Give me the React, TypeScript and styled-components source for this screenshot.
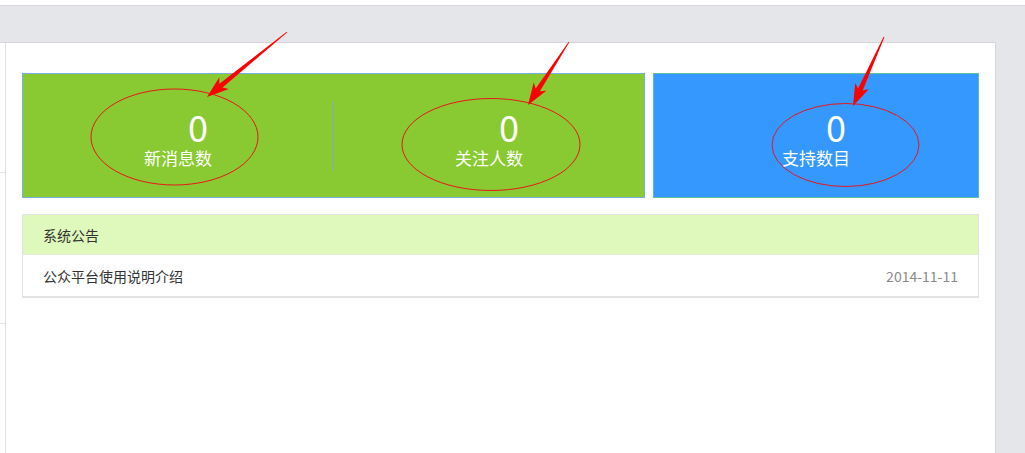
import React from "react";
import styled, { createGlobalStyle } from "styled-components";

const GlobalStyle = createGlobalStyle`
  html, body { margin: 0; padding: 0; background: #ffffff; }
  body { font-family: "Microsoft YaHei", "Noto Sans CJK SC", "Noto Sans", sans-serif; }
  * { box-sizing: border-box; }
`;

const Page = styled.div`
  position: relative;
  width: 1025px;
  height: 453px;
  overflow: hidden;
  background: #ffffff;
  display: flex;
  flex-direction: column;
`;

const TopStrip = styled.div`
  height: 6px;
  flex: none;
  background: #ffffff;
  border-bottom: 1px solid #d9d9dc;
`;

const Shell = styled.div`
  flex: 1;
  display: flex;
  background: #e5e6ea;
  padding: 36px 29px 0 0;
  min-height: 0;
`;

const Body = styled.div`
  flex: 1;
  display: flex;
  background: #ffffff;
  border-top: 1px solid #d6d6da;
  border-right: 1px solid #d6d6da;
`;

const SideStub = styled.div`
  width: 6px;
  flex: none;
  display: flex;
  flex-direction: column;
  border-right: 1px solid #e2e2e4;
  background: #ffffff;
`;

const SideItem = styled.div<{ $h: number }>`
  height: ${(p) => p.$h}px;
  flex: none;
  border-bottom: 1px solid #e2e2e4;
`;

const Content = styled.div`
  flex: 1;
  padding: 30px 16px 0 16px;
  display: flex;
  flex-direction: column;
`;

const StatsRow = styled.div`
  display: flex;
  gap: 8px;
  height: 125px;
`;

const StatCard = styled.div<{ $bg: string; $border: string; $w: number }>`
  width: ${(p) => p.$w}px;
  flex: none;
  display: flex;
  align-items: stretch;
  background: ${(p) => p.$bg};
  border: 1px solid ${(p) => p.$border};
`;

const Stat = styled.div`
  flex: 1;
  display: flex;
  flex-direction: column;
  align-items: center;
  padding-top: 32px;
  color: #ffffff;
`;

const StatNumber = styled.div`
  font-family: "Noto Sans CJK SC", "Noto Sans", sans-serif;
  font-size: 36px;
  line-height: 40px;
  margin-left: 40px;
`;

const StatLabel = styled.div`
  font-family: "Noto Sans CJK SC", sans-serif;
  font-size: 17px;
  line-height: 24px;
`;

const StatDivider = styled.div`
  width: 1px;
  height: 70px;
  align-self: center;
  background: #7faacb;
`;

const Notice = styled.div`
  margin-top: 16px;
  border: 1px solid #e3e3e6;
  border-bottom-width: 2px;
`;

const NoticeHeader = styled.div`
  height: 40px;
  display: flex;
  align-items: center;
  padding: 0 20px;
  background: #dff8bb;
  border-bottom: 1px solid #e4ecd8;
  font-family: "Noto Sans CJK SC", sans-serif;
  font-size: 14px;
  color: #333333;
`;

const NoticeRow = styled.div`
  height: 41px;
  display: flex;
  align-items: center;
  justify-content: space-between;
  padding: 0 20px;
  background: #ffffff;
  font-family: "Noto Sans CJK SC", sans-serif;
  font-size: 14px;
  color: #333333;
`;

const NoticeDate = styled.span`
  color: #8a8a8a;
  font-family: "Noto Sans CJK SC", sans-serif;
  font-size: 14px;
`;

const Overlay = styled.svg`
  position: absolute;
  left: 0;
  top: 0;
  width: 1025px;
  height: 453px;
  pointer-events: none;
`;

type Pt = [number, number];

function arrowPoints(tail: Pt, tip: Pt): string {
  const dx = tip[0] - tail[0];
  const dy = tip[1] - tail[1];
  const len = Math.hypot(dx, dy);
  const ux = dx / len;
  const uy = dy / len;
  const nx = -uy;
  const ny = ux;
  const headLen = 22;
  const headW = 15;
  const shaftW = 5;
  const bx = tip[0] - ux * headLen;
  const by = tip[1] - uy * headLen;
  const notch = 4;
  const cx = bx + ux * notch;
  const cy = by + uy * notch;
  const pts: Pt[] = [
    [tail[0] + nx * 0.4, tail[1] + ny * 0.4],
    [cx + nx * (shaftW / 2), cy + ny * (shaftW / 2)],
    [bx + nx * (headW / 2), by + ny * (headW / 2)],
    tip,
    [bx - nx * (headW / 2), by - ny * (headW / 2)],
    [cx - nx * (shaftW / 2), cy - ny * (shaftW / 2)],
    [tail[0] - nx * 0.4, tail[1] - ny * 0.4],
  ];
  return pts.map((p) => `${p[0].toFixed(1)},${p[1].toFixed(1)}`).join(" ");
}

const ellipses = [
  { cx: 174.5, cy: 137, rx: 83.5, ry: 48 },
  { cx: 491, cy: 144.5, rx: 89, ry: 46 },
  { cx: 845.5, cy: 145, rx: 73.5, ry: 41.5 },
];

const arrows: { tail: Pt; tip: Pt }[] = [
  { tail: [287, 32], tip: [207, 97] },
  { tail: [569, 42], tip: [528, 105] },
  { tail: [884, 37], tip: [853, 106] },
];

export default function App() {
  return (
    <>
      <GlobalStyle />
      <Page>
        <TopStrip />
        <Shell>
          <Body>
            <SideStub>
              <SideItem $h={130} />
              <SideItem $h={151} />
            </SideStub>
            <Content>
              <StatsRow>
                <StatCard $bg="#89c931" $border="#78aee0" $w={623}>
                  <Stat>
                    <StatNumber>0</StatNumber>
                    <StatLabel>新消息数</StatLabel>
                  </Stat>
                  <StatDivider />
                  <Stat>
                    <StatNumber>0</StatNumber>
                    <StatLabel>关注人数</StatLabel>
                  </Stat>
                </StatCard>
                <StatCard $bg="#3598fe" $border="#5cc3a0" $w={326}>
                  <Stat>
                    <StatNumber>0</StatNumber>
                    <StatLabel>支持数目</StatLabel>
                  </Stat>
                </StatCard>
              </StatsRow>
              <Notice>
                <NoticeHeader>系统公告</NoticeHeader>
                <NoticeRow>
                  <span>公众平台使用说明介绍</span>
                  <NoticeDate>2014-11-11</NoticeDate>
                </NoticeRow>
              </Notice>
            </Content>
          </Body>
        </Shell>
        <Overlay viewBox="0 0 1025 453">
          {ellipses.map((e, i) => (
            <ellipse
              key={i}
              cx={e.cx}
              cy={e.cy}
              rx={e.rx}
              ry={e.ry}
              fill="none"
              stroke="#e8161c"
              strokeWidth={1}
            />
          ))}
          {arrows.map((a, i) => (
            <polygon key={i} points={arrowPoints(a.tail, a.tip)} fill="#ff0000" />
          ))}
        </Overlay>
      </Page>
    </>
  );
}
